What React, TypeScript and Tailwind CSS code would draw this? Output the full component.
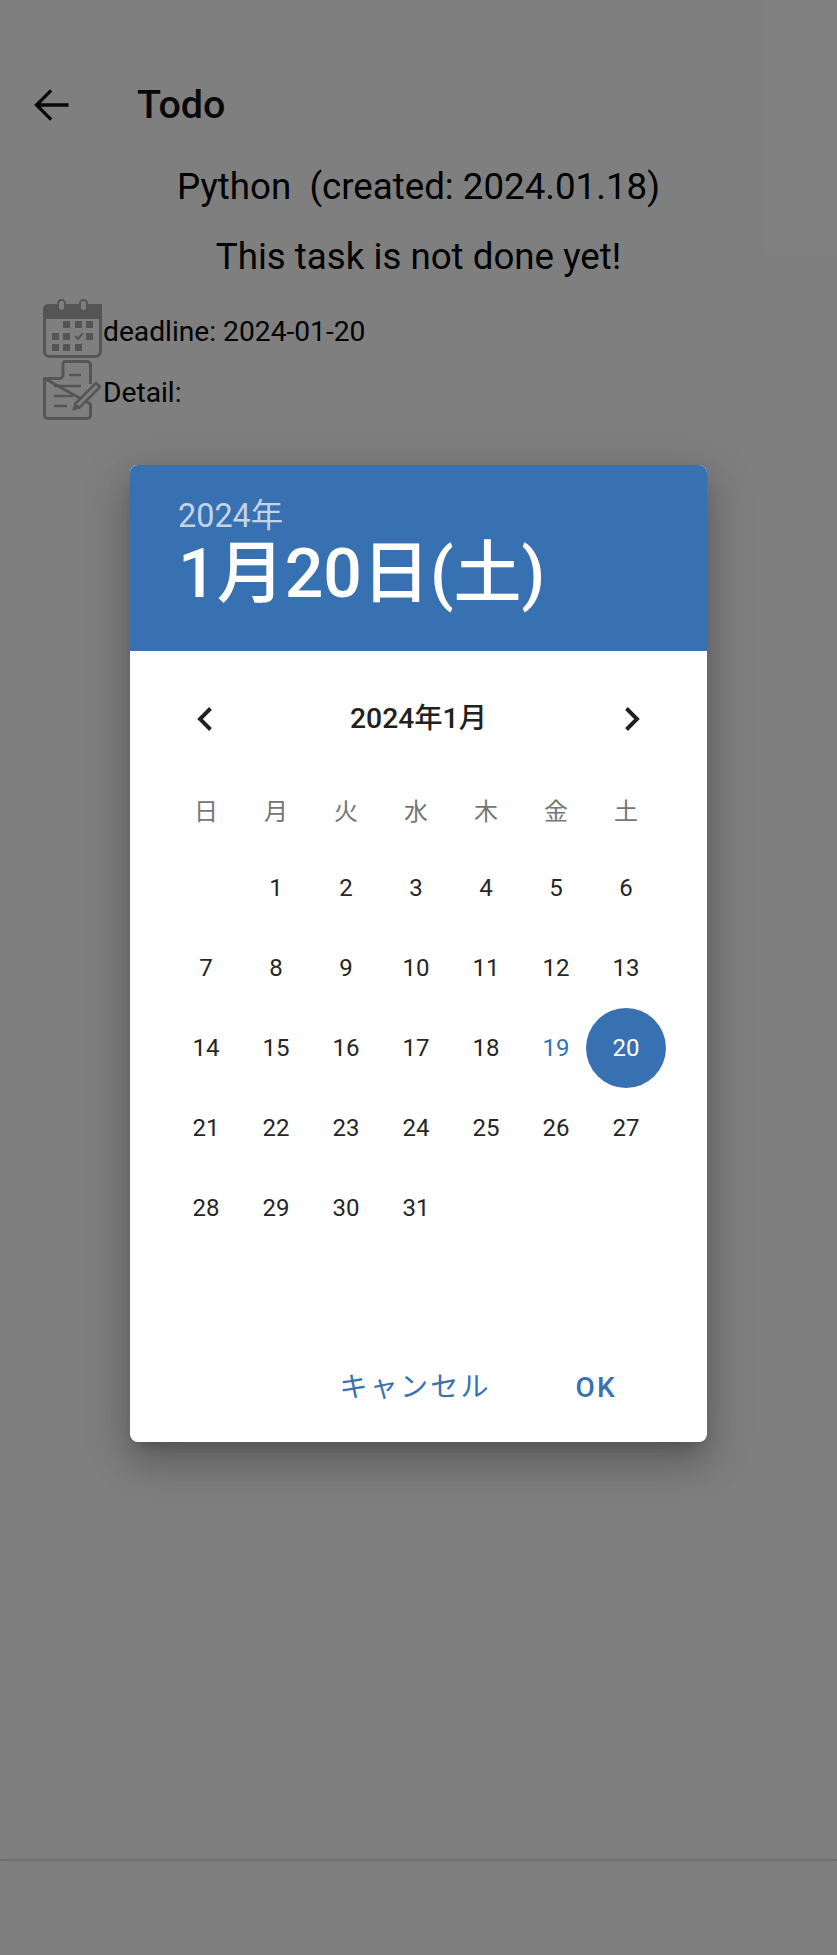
import React from "react";

const font = "font-['Roboto','Noto_Sans_CJK_JP',sans-serif]";

function CalendarIcon() {
  return (
    <svg width="60" height="60" viewBox="0 0 60 60" className="shrink-0">
      <path d="M5 5h54v15H0V10a5 5 0 0 1 5-5z" fill="#aaa" />
      <rect x="1.500" y="10" width="56" height="47.500" rx="5" fill="none" stroke="#aaa" strokeWidth="3" />
      <rect x="15" y="1" width="7" height="11" rx="3.500" fill="#fff" stroke="#aaa" strokeWidth="2" />
      <rect x="37" y="1" width="7" height="11" rx="3.500" fill="#fff" stroke="#aaa" strokeWidth="2" />
      {[
        [20, 22], [32, 22], [43, 22],
        [9, 34], [20, 34], [43, 34],
        [9, 45], [20, 45], [32, 45],
      ].map(([x, y]) => (
        <rect key={`${x}-${y}`} x={x} y={y} width="7" height="7" fill="#aaa" />
      ))}
      <path d="M32 37l3 3 5-6" fill="none" stroke="#aaa" strokeWidth="2" />
    </svg>
  );
}

function DocIcon() {
  return (
    <svg width="60" height="60" viewBox="0 0 60 60" className="shrink-0">
      <path
        d="M20 1.500h24a3.500 3.500 0 0 1 3.500 3.500v19M47.500 44v11a3.500 3.500 0 0 1-3.500 3.500H5A3.500 3.500 0 0 1 1.500 55V18.500z"
        fill="none"
        stroke="#aaa"
        strokeWidth="3"
        strokeLinejoin="round"
      />
      <path d="M20 2v13a3.500 3.500 0 0 1-3.500 3.500H2" fill="none" stroke="#aaa" strokeWidth="3" />
      <path d="M26 15h12M11 26h27M11 36h19M11 46h13" fill="none" stroke="#aaa" strokeWidth="2.500" />
      <path d="M32 44l21-21 4 4-21 21z" fill="#fff" stroke="#aaa" strokeWidth="2.500" strokeLinejoin="round" />
      <path d="M29 51l2.500-8 5.500 5.500z" fill="#aaa" />
    </svg>
  );
}

const weeks: (number | null)[][] = [
  [null, 1, 2, 3, 4, 5, 6],
  [7, 8, 9, 10, 11, 12, 13],
  [14, 15, 16, 17, 18, 19, 20],
  [21, 22, 23, 24, 25, 26, 27],
  [28, 29, 30, 31, null, null, null],
];

function Cell({ d }: { d: number | null }) {
  if (d === null) return <div className="h-20" />;
  return (
    <div className="h-20 flex items-center justify-center">
      {d === 20 ? (
        <div className="size-20 shrink-0 rounded-full bg-[#3871b1] text-white flex items-center justify-center">20</div>
      ) : (
        <span className={d === 19 ? "text-[#3871b1]" : "text-[#262626]"}>{d}</span>
      )}
    </div>
  );
}

export default function App() {
  return (
    <div className={`relative w-full h-[1955px] bg-white overflow-hidden text-black ${font}`}>
      <div className="h-[210px]">
        <div className="h-[140px] flex items-center pl-[31px] pt-[70px]">
          <svg width="44" height="44" viewBox="0 0 24 24" fill="none" stroke="#111" strokeWidth="1.800" className="shrink-0">
            <path d="M20.500 12H3.500M11 4l-8 8 8 8" />
          </svg>
          <span className="ml-[62px] text-[39.500px] leading-none font-medium text-[#111]">Todo</span>
        </div>
      </div>
      <div className="text-center text-[36.700px] leading-[44px] -mt-[45px]">Python&nbsp;&nbsp;(created: 2024.01.18)</div>
      <div className="text-center text-[36.700px] leading-[44px] mt-[26px]">This task is not done yet!</div>
      <div className="pl-[43px] mt-[20px] flex flex-col gap-px text-[28.200px] leading-none">
        <div className="flex items-center h-[60px]">
          <CalendarIcon />
          <span className="pt-[7px]">deadline: 2024-01-20</span>
        </div>
        <div className="flex items-center h-[60px]">
          <DocIcon />
          <span className="pt-[6px]">Detail:</span>
        </div>
      </div>

      <div className="absolute left-0 right-0 top-[1859px] h-[2px] bg-[#e0e0e0] shadow-[0_0_3px_rgba(0,0,0,0.08)]" />

      <div className="absolute inset-0 bg-black/50 flex justify-center items-start pt-[465px]">
        <div className="w-[577px] h-[977px] bg-white rounded-[8px] overflow-hidden shadow-[0_11px_15px_-7px_rgba(0,0,0,0.2),0_24px_38px_3px_rgba(0,0,0,0.14),0_9px_46px_8px_rgba(0,0,0,0.12)] flex flex-col">
          <div className="h-[186px] bg-[#3871b1] pl-[48px] pt-[31px] text-white">
            <div className="text-[32.400px] leading-[40px] text-[#c3d4e8]">2024年</div>
            <div className="text-[68px] leading-[76px] font-medium">1月20日(土)</div>
          </div>
          <div className="flex-1 flex flex-col">
            <div className="h-[136px] flex items-center justify-between pl-[58px] pr-[58px]">
              <svg width="36" height="36" viewBox="0 0 24 24" fill="none" stroke="#212121" strokeWidth="2.600">
                <path d="M15 5l-7 7 7 7" />
              </svg>
              <span className="text-[28.300px] font-medium text-[#212121]">2024年1月</span>
              <svg width="36" height="36" viewBox="0 0 24 24" fill="none" stroke="#212121" strokeWidth="2.600">
                <path d="M9 5l7 7-7 7" />
              </svg>
            </div>
            <div className="grid grid-cols-7 pl-[41px] pr-[46px] h-[50px] items-center text-center text-[24px] text-[#757575]">
              {["日", "月", "火", "水", "木", "金", "土"].map((w) => (
                <div key={w}>{w}</div>
              ))}
            </div>
            <div className="grid grid-cols-7 pl-[41px] pr-[46px] text-center text-[24px] mt-[11px]">
              {weeks.flat().map((d, i) => (
                <Cell key={i} d={d} />
              ))}
            </div>
          </div>
          <div className="flex justify-end items-center gap-[85px] pr-[90px] pb-[33px] text-[28px] tracking-[2.200px] text-[#3871b1]">
            <span className="font-normal">キャンセル</span>
            <span className="font-medium">OK</span>
          </div>
        </div>
      </div>
    </div>
  );
}
